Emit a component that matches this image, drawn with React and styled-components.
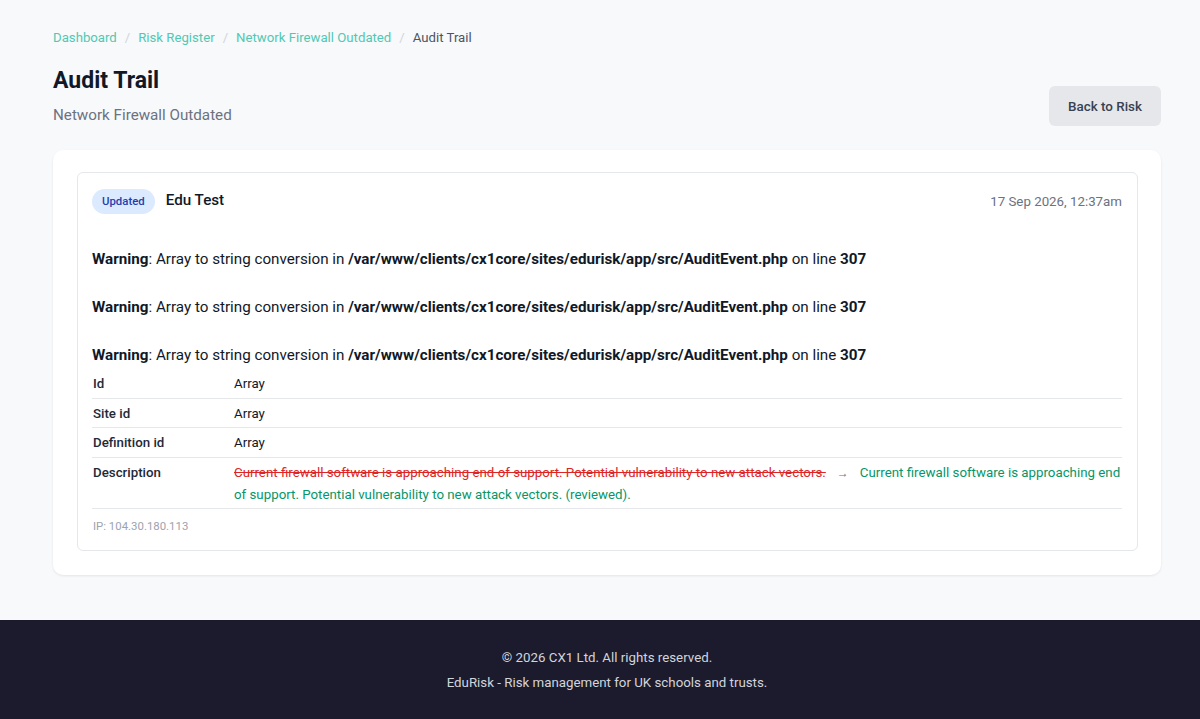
import React from 'react'
import styled, { createGlobalStyle } from 'styled-components'

const GlobalStyle = createGlobalStyle`
  * { box-sizing: border-box; }
  html, body {
    margin: 0;
    padding: 0;
    background: #f8f9fb;
    font-family: Roboto, "Liberation Sans", Arial, sans-serif;
    color: #111827;
  }
`

const Page = styled.div`
  min-height: 719px;
  display: flex;
  flex-direction: column;
`

const Main = styled.main`
  padding: 28px 39px 45px 53px;
`

const Crumbs = styled.nav`
  display: flex;
  align-items: center;
  font-size: 13.2px;
  line-height: 20px;
  gap: 8px;
`

const Crumb = styled.a`
  color: ${p => (p.$current ? '#4b5563' : '#4fc9b4')};
  text-decoration: none;
`

const Sep = styled.span`
  color: #d1d5db;
`

const HeadRow = styled.div`
  display: flex;
  justify-content: space-between;
  align-items: flex-end;
  margin-top: 17px;
`

const Title = styled.h1`
  margin: 0;
  font-size: 23px;
  line-height: 32px;
  font-weight: 700;
  color: #111827;
`

const Subtitle = styled.p`
  margin: 6px 0 0;
  font-size: 15.2px;
  line-height: 24px;
  color: #6b7280;
`

const Button = styled.button`
  font-family: inherit;
  font-size: 13.4px;
  font-weight: 500;
  color: #374151;
  background: #e5e7eb;
  border: none;
  border-radius: 6px;
  height: 40px;
  padding: 0 19px;
  margin-bottom: 1px;
`

const Panel = styled.section`
  margin-top: 23px;
  background: #fff;
  border-radius: 10px;
  box-shadow: 0 1px 3px rgba(15, 23, 42, 0.06), 0 1px 2px rgba(15, 23, 42, 0.03);
  padding: 22px 23px 24px 24px;
`

const Entry = styled.article`
  border: 1px solid #e5e7eb;
  border-radius: 6px;
  padding: 15px 15px 15px 14px;
`

const EntryHead = styled.div`
  display: flex;
  align-items: center;
  justify-content: space-between;
  height: 26px;
  margin-bottom: 9px;
`

const Who = styled.div`
  display: flex;
  align-items: center;
  gap: 11px;
`

const Badge = styled.span`
  display: inline-flex;
  align-items: center;
  height: 25px;
  padding: 0 10px;
  border-radius: 999px;
  background: #dbeafe;
  color: #1e40af;
  font-size: 11.4px;
  font-weight: 500;
`

const User = styled.span`
  font-size: 15.2px;
  font-weight: 500;
  color: #111827;
  margin-top: -3px;
`

const When = styled.span`
  font-size: 13.3px;
  color: #6b7280;
`

const Warning = styled.p`
  margin: 0;
  padding-top: 24px;
  font-size: 15.2px;
  line-height: 24px;
  color: #111827;

  b { font-weight: 700; }
`

const Changes = styled.table`
  width: 100%;
  margin-top: 2px;
  border-collapse: collapse;
  font-size: 13.3px;
  line-height: 21px;
`

const Row = styled.tr`
  border-bottom: 1px solid #e5e7eb;
`

const Label = styled.td`
  width: 142px;
  padding: 4px 0 3.6px 1px;
  vertical-align: top;
  font-weight: 500;
  color: #1f2937;
`

const Value = styled.td`
  padding: 4px 0 3.6px;
  vertical-align: top;
  color: #111827;
`

const Old = styled.del`
  color: #dc2626;
`

const Arrow = styled.span`
  color: #6b7280;
  margin: 0 11px;
  font-size: 12px;
`

const New = styled.span`
  color: #059669;
`

const Ip = styled.div`
  margin-top: 8px;
  padding-left: 1px;
  font-size: 11.4px;
  line-height: 18px;
  color: #9ca3af;
`

const Footer = styled.footer`
  margin-top: auto;
  background: #1c1b2e;
  color: #d1d5db;
  text-align: center;
  font-size: 13.3px;
  line-height: 25px;
  padding: 25px 39px 26px 53px;
`

const path = '/var/www/clients/cx1core/sites/edurisk/app/src/AuditEvent.php'

const WarningLine = () => (
  <Warning>
    <b>Warning</b>: Array to string conversion in <b>{path}</b> on line <b>307</b>
  </Warning>
)

const fields = [
  ['Id', 'Array'],
  ['Site id', 'Array'],
  ['Definition id', 'Array'],
]

export default function App() {
  return (
    <Page>
      <GlobalStyle />
      <Main>
        <Crumbs>
          <Crumb href="#">Dashboard</Crumb>
          <Sep>/</Sep>
          <Crumb href="#">Risk Register</Crumb>
          <Sep>/</Sep>
          <Crumb href="#">Network Firewall Outdated</Crumb>
          <Sep>/</Sep>
          <Crumb $current>Audit Trail</Crumb>
        </Crumbs>

        <HeadRow>
          <div>
            <Title>Audit Trail</Title>
            <Subtitle>Network Firewall Outdated</Subtitle>
          </div>
          <Button>Back to Risk</Button>
        </HeadRow>

        <Panel>
          <Entry>
            <EntryHead>
              <Who>
                <Badge>Updated</Badge>
                <User>Edu Test</User>
              </Who>
              <When>17 Sep 2026, 12:37am</When>
            </EntryHead>

            <WarningLine />
            <WarningLine />
            <WarningLine />

            <Changes>
              <tbody>
                {fields.map(([k, v]) => (
                  <Row key={k}>
                    <Label>{k}</Label>
                    <Value>{v}</Value>
                  </Row>
                ))}
                <Row>
                  <Label>Description</Label>
                  <Value>
                    <Old>Current firewall software is approaching end of support. Potential vulnerability to new attack vectors.</Old>
                    <Arrow>→</Arrow>
                    <New>Current firewall software is approaching end of support. Potential vulnerability to new attack vectors. (reviewed).</New>
                  </Value>
                </Row>
              </tbody>
            </Changes>
            <Ip>IP: 104.30.180.113</Ip>
          </Entry>
        </Panel>
      </Main>
      <Footer>
        <div>© 2026 CX1 Ltd. All rights reserved.</div>
        <div>EduRisk - Risk management for UK schools and trusts.</div>
      </Footer>
    </Page>
  )
}
